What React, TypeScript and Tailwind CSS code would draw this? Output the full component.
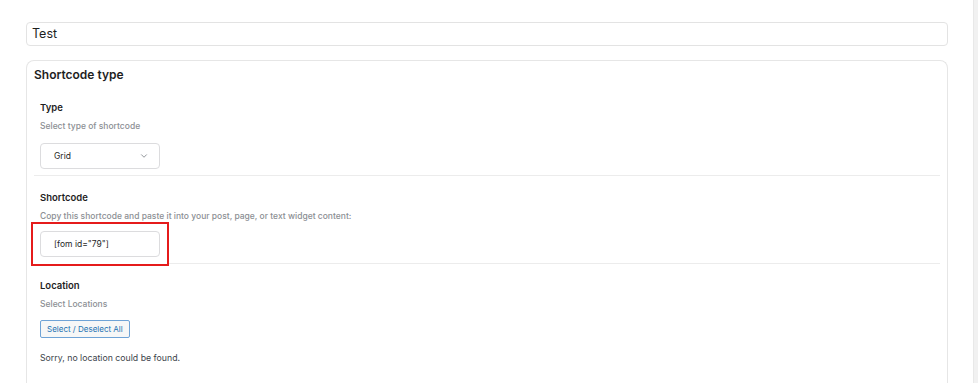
import { ChevronDown } from "lucide-react"

const Section = ({ label, desc, children, last }: { label: string; desc: string; children: React.ReactNode; last?: boolean }) => {
    return <div className={`px-[6px] pt-[15px] ${last ? "" : "pb-[6px] border-b border-[#ececec]"}`}>
        <div className="text-[9.5px] leading-[14px] font-semibold text-[#1e1e1e]">{label}</div>
        <div className="mt-[5px] text-[8.5px] leading-[12px] font-medium text-[#8c8f94]">{desc}</div>
        {children}
    </div>
}

const App = () => {
    return <div className="flex h-[383px] w-full bg-white font-['Inter',sans-serif] overflow-hidden">
        <main className="flex-1 pl-[26px] pr-[25px] pt-[22px]">
            {/* TITLE */}
            <div className="h-[24px] rounded-[4px] border border-[#e3e3e3] px-[5px] flex items-center text-[12.5px] text-[#1e1e1e]">
                Test
            </div>

            {/* SHORTCODE TYPE CARD */}
            <div className="mt-[14px] rounded-t-[8px] border border-b-0 border-[#e6e6e6] px-[7px] pt-[4px] h-[400px]">
                <h2 className="text-[12px] leading-[20px] font-semibold text-[#1e1e1e]">Shortcode type</h2>

                <div className="mt-[1px]">
                    <Section label="Type" desc="Select type of shortcode">
                        <div className="mt-[11px] w-[120px] h-[26px] rounded-[4px] border border-[#dcdcde] flex items-center justify-between pl-[13px] pr-[10px] text-[8.5px] text-[#1e1e1e]">
                            <span>Grid</span>
                            <ChevronDown size={10} strokeWidth={1.5} className="text-[#50575e]" />
                        </div>
                    </Section>

                    <Section label="Shortcode" desc="Copy this shortcode and paste it into your post, page, or text widget content:">
                        <div className="relative mt-[9px] w-[120px]">
                            <div className="absolute -left-[9px] -top-[9px] -right-[9px] -bottom-[9px] border-2 border-[#e51b1b] bg-white" />
                            <div className="relative h-[26px] rounded-[4px] border border-[#dcdcde] bg-white flex items-center pl-[13px] text-[8.5px] text-[#1e1e1e]">
                                [fom id="79"]
                            </div>
                        </div>
                    </Section>

                    <Section label="Location" desc="Select Locations" last>
                        <button className="mt-[10px] h-[18px] px-[6px] rounded-[2px] border border-[#6fa3d6] bg-[#f6f7f7] text-[8px] text-[#2271b1]">
                            Select / Deselect All
                        </button>
                        <p className="mt-[13px] text-[8.75px] leading-[14px] text-[#3c434a]">Sorry, no location could be found.</p>
                    </Section>
                </div>
            </div>
        </main>

        {/* SCROLLBAR */}
        <div className="w-[5px] bg-[#f1f1f1] border-l border-[#e8e8e8]" />
    </div>
}

export default App
